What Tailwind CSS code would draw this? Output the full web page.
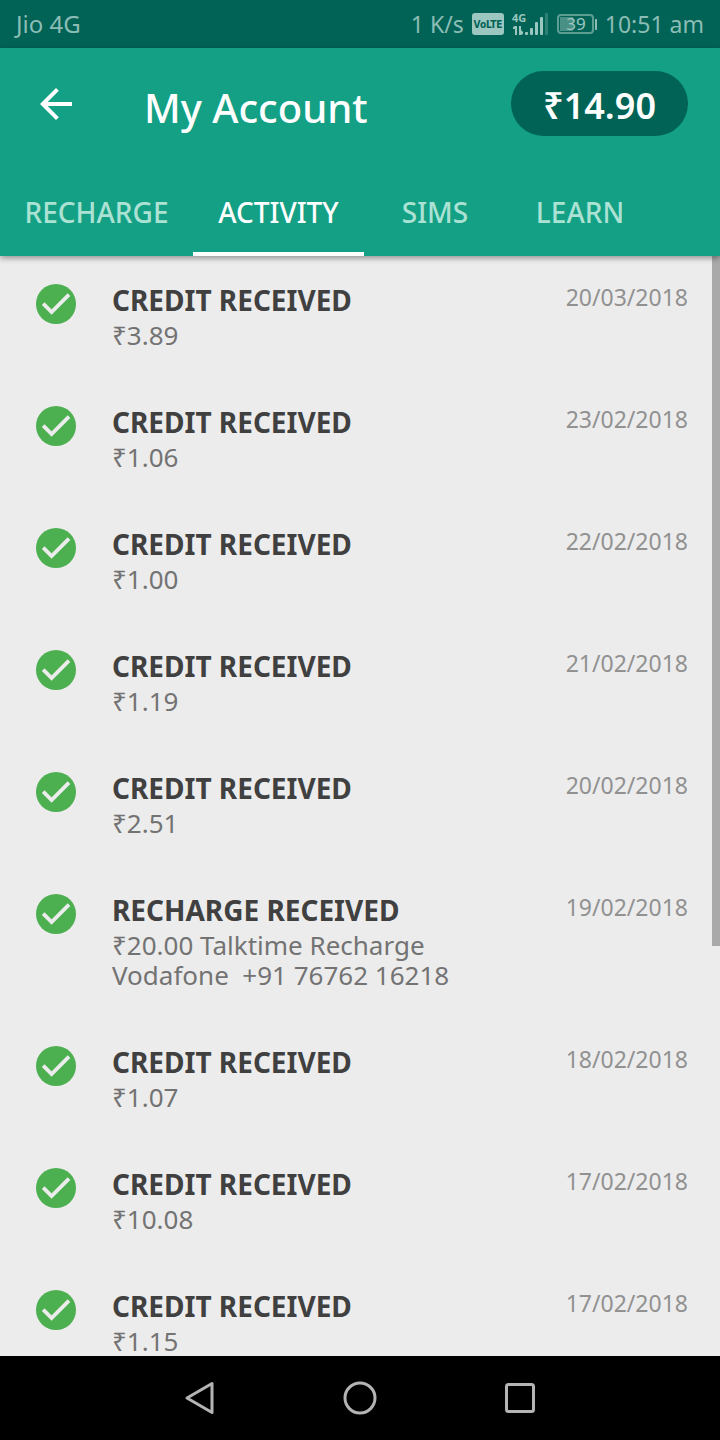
<!DOCTYPE html>
<html lang="en">
<head>
  <meta charset="UTF-8">
  <meta name="viewport" content="width=device-width, initial-scale=1">
  <title>My Account</title>
  <script src="https://cdn.jsdelivr.net/npm/@tailwindcss/browser@4"></script>
</head>
<body class="h-screen flex flex-col bg-[#ececec] font-['Noto_Sans',sans-serif] overflow-hidden">

  <!-- Status bar -->
  <div class="h-12 shrink-0 flex items-center justify-between px-4 bg-[#006355] text-[#8cbdb5] text-2xl">
    <span>Jio 4G</span>
    <div class="flex items-center gap-2 text-[23px]">
      <span>1 K/s</span>
      <svg class="w-8 h-[22px]" viewBox="0 0 32 22">
        <rect width="32" height="22" rx="3" fill="#9cc7c0"/>
        <text x="16" y="15" text-anchor="middle" font-size="10" font-weight="700" fill="#006355" font-family="DejaVu Sans Condensed, Open Sans, sans-serif">VoLTE</text>
      </svg>
      <svg class="w-9 h-6" viewBox="0 0 36 24" fill="#9cc7c0">
        <text x="0" y="10" font-size="11" font-weight="700" font-family="Noto Sans, sans-serif">4G</text>
        <path d="M3 14h2v9H3v-6H1v-2zM7 14h2v4l2 2v2l-2 1H7z"/>
        <rect x="13" y="20" width="3" height="3" rx="1"/>
        <rect x="18" y="16" width="3" height="7" rx="1"/>
        <rect x="23" y="10" width="3" height="13" rx="1"/>
        <rect x="28" y="5" width="3" height="18" rx="1"/>
        <rect x="33" y="1" width="3" height="22" rx="1" opacity=".3"/>
      </svg>
      <svg class="ml-px w-10 h-5" viewBox="0 0 40 20">
        <rect x="1" y="1" width="35" height="18" rx="3" fill="none" stroke="#5d9e93" stroke-width="2"/>
        <rect x="3" y="3" width="13" height="14" fill="#4a9085"/>
        <text x="19" y="16" text-anchor="middle" font-size="17" fill="#9cc7c0" font-family="Noto Sans, sans-serif">39</text>
        <rect x="38" y="5" width="3" height="11" rx="1" fill="#8cbdb5"/>
      </svg>
      <span>10:51 am</span>
    </div>
  </div>

  <!-- App bar -->
  <header class="relative z-10 shrink-0 bg-[#14a085] text-white shadow-[0_2px_6px_rgba(0,0,0,0.4)]">
    <div class="h-[120px] flex items-start px-8 pt-6">
      <button aria-label="Back" class="w-12 h-16 flex items-center justify-center">
        <svg class="w-12 h-12" viewBox="0 0 24 24" fill="currentColor">
          <path d="M20 11H7.830l5.590-5.590L12 4l-8 8 8 8 1.410-1.410L7.830 13H20v-2z"/>
        </svg>
      </button>
      <h1 class="ml-16 pt-2 flex-1 text-[40px] leading-[56px] font-medium">My Account</h1>
      <button class="-mt-px h-[65px] px-8 pt-1 rounded-full bg-[#006355] text-4xl font-semibold">₹14.90</button>
    </div>
    <nav class="h-[88px] flex text-[28px] font-medium text-[#abe2d4]">
      <a href="#recharge" class="w-[193px] flex items-center justify-center">RECHARGE</a>
      <a href="#activity" class="w-[171px] pt-1 flex items-center justify-center border-b-4 border-white text-white">ACTIVITY</a>
      <a href="#sims" class="w-[142px] flex items-center justify-center">SIMS</a>
      <a href="#learn" class="w-[148px] flex items-center justify-center">LEARN</a>
    </nav>
  </header>

  <!-- Activity list -->
  <main class="relative flex-1 min-h-0 overflow-hidden">
    <ul id="activityList"></ul>
    <div class="absolute top-0 right-0 w-2 h-[690px] bg-[#a9a9a9]"></div>
  </main>

  <!-- Navigation bar -->
  <footer class="h-[84px] shrink-0 flex items-center justify-center gap-28 bg-black text-[#b4b4b4]">
    <button aria-label="Back">
      <svg class="w-12 h-12" viewBox="0 0 48 48" fill="none" stroke="currentColor" stroke-width="3" stroke-linejoin="round">
        <path d="M36 9.500v29L11 24z"/>
      </svg>
    </button>
    <button aria-label="Home">
      <svg class="w-12 h-12" viewBox="0 0 48 48" fill="none" stroke="currentColor" stroke-width="3">
        <circle cx="24" cy="24" r="15"/>
      </svg>
    </button>
    <button aria-label="Recent apps">
      <svg class="w-12 h-12" viewBox="0 0 48 48" fill="none" stroke="currentColor" stroke-width="3">
        <rect x="10.500" y="10.500" width="27" height="27" rx="2"/>
      </svg>
    </button>
  </footer>

  <script>
    const items = [
      { title: "CREDIT RECEIVED", text: "₹3.89", date: "20/03/2018" },
      { title: "CREDIT RECEIVED", text: "₹1.06", date: "23/02/2018" },
      { title: "CREDIT RECEIVED", text: "₹1.00", date: "22/02/2018" },
      { title: "CREDIT RECEIVED", text: "₹1.19", date: "21/02/2018" },
      { title: "CREDIT RECEIVED", text: "₹2.51", date: "20/02/2018" },
      { title: "RECHARGE RECEIVED", text: "₹20.00 Talktime Recharge\nVodafone  +91 76762 16218", date: "19/02/2018" },
      { title: "CREDIT RECEIVED", text: "₹1.07", date: "18/02/2018" },
      { title: "CREDIT RECEIVED", text: "₹10.08", date: "17/02/2018" },
      { title: "CREDIT RECEIVED", text: "₹1.15", date: "17/02/2018" }
    ];

    const list = document.getElementById("activityList");
    items.forEach(item => {
      list.innerHTML += `
        <li class="flex items-start px-8 pt-6 pb-7">
          <svg class="w-12 h-12 shrink-0" viewBox="0 0 24 24">
            <circle cx="12" cy="12" r="10" fill="#4caf50"/>
            <path d="M5.600 11.800l4.200 4.200 8.700-8.700" fill="none" stroke="#ececec" stroke-width="1.900"/>
          </svg>
          <div class="ml-8 flex-1">
            <h2 class="text-[28px] leading-10 font-bold text-[#404040]">${item.title}</h2>
            <p class="text-[26px] leading-[30px] text-[#737373] whitespace-pre-wrap">${item.text}</p>
          </div>
          <time class="text-[23px] leading-[34px] text-[#919191]">${item.date}</time>
        </li>`;
    });
  </script>
</body>
</html>
